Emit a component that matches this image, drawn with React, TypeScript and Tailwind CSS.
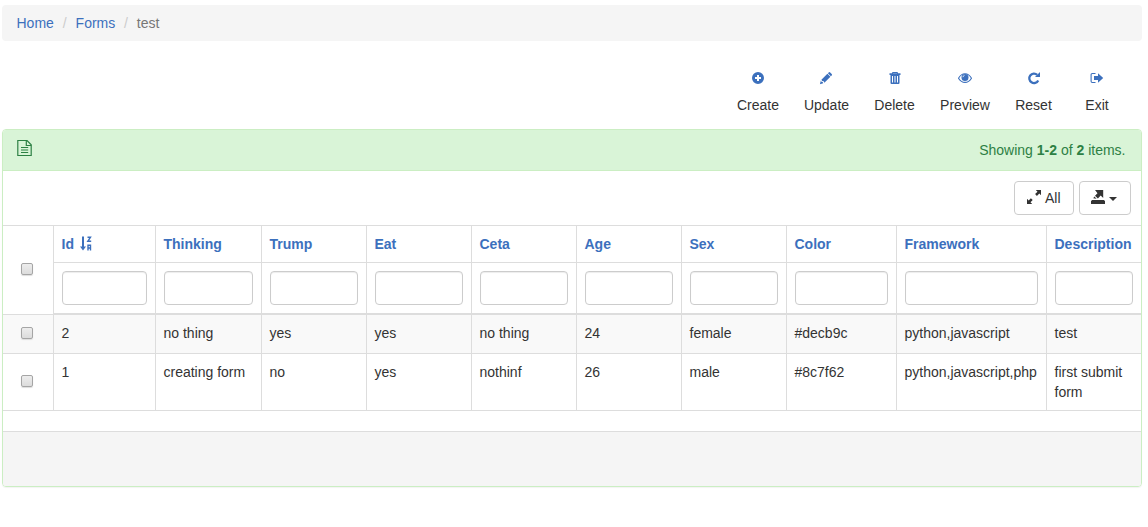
import React from "react";

const columns = ["Id", "Thinking", "Trump", "Eat", "Ceta", "Age", "Sex", "Color", "Framework", "Description"];

const rows = [
  ["2", "no thing", "yes", "yes", "no thing", "24", "female", "#decb9c", "python,javascript", "test"],
  ["1", "creating form", "no", "yes", "nothinf", "26", "male", "#8c7f62", "python,javascript,php", "first submit form"],
];

const gridColumns = "grid grid-cols-[50px_102px_106px_105px_105px_105px_105px_105px_110px_150px_95px]";

function PlusIcon() {
  return (
    <svg viewBox="0 0 14 14" className="size-[14px]" fill="currentColor">
      <path fillRule="evenodd" d="M7 1a6 6 0 1 0 0 12A6 6 0 0 0 7 1ZM6 4h2v2h2v2H8v2H6V8H4V6h2Z" />
    </svg>
  );
}

function PencilIcon() {
  return (
    <svg viewBox="0 0 14 14" className="-ml-px size-[14px]" fill="currentColor">
      <path d="M9.7 1.4q.7-.7 1.5 0l1.5 1.5q.7.7 0 1.5l-.8.8-3-3ZM8.4 2.7l3 3-6 6-.7-1.4-1.5-.4-.8-1.2ZM1.9 9.4l.5 1.3 1.3.3.5 1.3-3.3.9Z" />
    </svg>
  );
}

function TrashIcon() {
  return (
    <svg viewBox="0 0 14 14" className="size-[14px]">
      <path d="M4.5 3V1.5h5V3" fill="none" stroke="currentColor" />
      <path fillRule="evenodd" fill="currentColor" d="M1.5 2.3h11V4h-11ZM2.5 4h9v8q0 1-1 1h-7q-1 0-1-1ZM4 5v6.5h1V5ZM6.5 5v6.5h1V5ZM9 5v6.5h1V5Z" />
    </svg>
  );
}

function EyeIcon() {
  return (
    <svg viewBox="0 0 14 14" className="size-[14px]" fill="none" stroke="currentColor">
      <path d="M.5 7.2Q3.1 2.8 7 2.8T13.5 7.2Q10.9 11.4 7 11.4T.5 7.2Z" strokeWidth="1.1" />
      <circle cx="7" cy="6.5" r="3.5" fill="currentColor" stroke="none" />
      <path d="M4.9 6.2q.2-1.6 1.6-1.8" stroke="white" strokeWidth=".8" />
    </svg>
  );
}

function ResetIcon() {
  return (
    <svg viewBox="0 0 14 14" className="size-[14px]">
      <path d="M10.2 3.9A4.7 4.7 0 1 0 11.2 9.4" fill="none" stroke="currentColor" strokeWidth="2.3" />
      <path d="M13 1v5H8Z" fill="currentColor" />
    </svg>
  );
}

function ExitIcon() {
  return (
    <svg viewBox="0 0 14 14" className="size-[14px]">
      <path d="M5.5 2.5H2.3q-1.2 0-1.2 1.2v6.6q0 1.2 1.2 1.2h3.2" fill="none" stroke="currentColor" strokeWidth="1.1" />
      <path d="M4 5h4V2.2L13.2 7 8 11.8V9H4Z" fill="currentColor" />
    </svg>
  );
}

function DocumentIcon() {
  return (
    <svg viewBox="0 0 16 17" className="h-[17px] w-4" fill="none" stroke="currentColor">
      <path d="M.8.5H10l4.2 4.3v10.7H.8Z" strokeWidth="1.2" />
      <path d="M9.3.5v5h5" strokeWidth="1.2" />
      <path d="M4 7.5h7.2M4 10h7.2M4 12.5h7.2" strokeWidth="1.1" />
    </svg>
  );
}

function SortIcon() {
  return (
    <svg viewBox="0 0 13 15" className="-mt-px ml-[6px] h-[15px] w-[13px]" fill="none" stroke="currentColor">
      <path d="M3 .5v12" strokeWidth="2" />
      <path d="M0 10.5h6L3 14.5Z" fill="currentColor" stroke="none" />
      <path d="M7.5 1.2h3L7.8 5.3h3.4M8 14.5V9.2h2.5v5.3M8 12h2.5" strokeWidth="1.4" />
    </svg>
  );
}

function ExpandIcon() {
  return (
    <svg viewBox="0 0 14 14" className="-mt-[3px] size-[14px]" fill="currentColor">
      <path d="M8.8 0h5.2v5.2l-1.7-1.7-2.4 2.4-1.8-1.8 2.4-2.4ZM0 8.8l1.7 1.7 2.2-2.3 1.8 1.8-2.2 2.3L5.2 14H0Z" />
    </svg>
  );
}

function ExportIcon() {
  return (
    <svg viewBox="0 0 14 14" className="-mt-0.5 size-[14px]" fill="currentColor">
      <path d="M4 0h8.2v8L9.7 5.6 6.9 8.4 4 5.8 6.5 3.2ZM2.2 8.2l1.2-1.7 2.2 2.2ZM1 10h12l1 1.3V14H0v-2.7Z" />
    </svg>
  );
}

const actions = [
  { label: "Create", width: "w-[42px]", icon: <PlusIcon /> },
  { label: "Update", width: "w-[45px]", icon: <PencilIcon /> },
  { label: "Delete", width: "w-[41px]", icon: <TrashIcon /> },
  { label: "Preview", width: "w-[50px]", icon: <EyeIcon /> },
  { label: "Reset", width: "w-[37px]", icon: <ResetIcon /> },
  { label: "Exit", width: "ml-2 w-[24px]", icon: <ExitIcon /> },
];

function Checkbox({ label }: { label: string }) {
  return (
    <input
      type="checkbox"
      aria-label={label}
      className="block h-3 w-3 appearance-none rounded-[2px] border border-[#a5a5a5] bg-linear-to-b from-[#ededed] to-[#dcdcdc] shadow-[0_1px_1px_#ddd]"
    />
  );
}

export default function App() {
  return (
    <div className="h-[527px] w-[1148px] overflow-hidden bg-white pt-[5px] pl-0.5 font-['Liberation_Sans',Arial,sans-serif] text-[14px] leading-5 text-[#333]">
      <nav className="flex h-9 w-[1140px] items-center rounded bg-[#f5f5f5] pl-[14.5px]">
        <a className="text-[#3c70bd]">Home</a>
        <span className="w-[21.75px] text-center text-[#ccc]">/</span>
        <a className="text-[#3c70bd]">Forms</a>
        <span className="w-[21.5px] text-center text-[#ccc]">/</span>
        <span className="text-[#777]">test</span>
      </nav>

      <div className="flex h-[88px] w-[1140px] justify-end gap-[25px] pt-[30px] pr-[33px]">
        {actions.map((action) => (
          <button key={action.label} className={`flex flex-col items-center ${action.width}`}>
            <span className="text-[#3c70bd]">{action.icon}</span>
            <span className="mt-[10px] whitespace-nowrap">{action.label}</span>
          </button>
        ))}
      </div>

      <section className="w-[1140px] overflow-hidden rounded border border-[#cbeec3] shadow-[0_1px_1px_rgba(0,0,0,0.05)]">
        <header className="flex h-[41px] items-center justify-between border-b border-[#cbeec3] bg-[#d9f4d7] pr-[15.5px] pl-[14px] text-[#2d8044]">
          <span className="-mt-1"><DocumentIcon /></span>
          <span>Showing <b>1-2</b> of <b>2</b> items.</span>
        </header>

        <div className="flex h-[54px] justify-end gap-[5px] pt-[10px] pr-[10px]">
          <button className="flex h-[34px] w-[60px] items-center justify-center gap-[3.5px] rounded border border-[#ccc]">
            <ExpandIcon />All
          </button>
          <button className="flex h-[34px] w-[52px] items-center justify-center gap-[4px] rounded border border-[#ccc] pr-0.5">
            <ExportIcon />
            <span className="mt-0.5 border-x-4 border-t-4 border-x-transparent border-t-[#333]" />
          </button>
        </div>

        <div role="table">
          <div className={`${gridColumns} h-[90px] border-t border-[#ddd]`}>
            <div className="flex items-center justify-center border-b border-[#ddd] pr-0.5 pb-0.5">
              <Checkbox label="Select all" />
            </div>
            {columns.map((column) => (
              <div key={column} className="border-b-2 border-l border-[#ddd]">
                <div className="flex h-[37px] items-center border-b border-[#ddd] pl-[7.5px] font-bold text-[#3c70bd]">
                  {column}
                  {column === "Id" && <SortIcon />}
                </div>
                <div className="p-2">
                  <input
                    aria-label={column}
                    className="block h-[34px] w-full rounded border border-[#ccc] bg-white px-3 shadow-[inset_0_1px_1px_rgba(0,0,0,0.075)]"
                  />
                </div>
              </div>
            ))}
          </div>
          {rows.map((row, index) => (
            <div
              key={row[0]}
              className={`${gridColumns} border-b border-[#ddd] ${index === 0 ? "h-[39px] bg-[#f9f9f9]" : "h-[57px]"}`}
            >
              <div className="flex items-center justify-center pr-0.5 pb-0.5">
                <Checkbox label={`Select ${row[0]}`} />
              </div>
              {row.map((value, cell) => (
                <div key={columns[cell]} className="border-l border-[#ddd] pt-2 pl-[7.5px]">{value}</div>
              ))}
            </div>
          ))}
        </div>

        <footer className="mt-5 h-[55px] border-t border-[#ddd] bg-[#f5f5f5]" />
      </section>
    </div>
  );
}
